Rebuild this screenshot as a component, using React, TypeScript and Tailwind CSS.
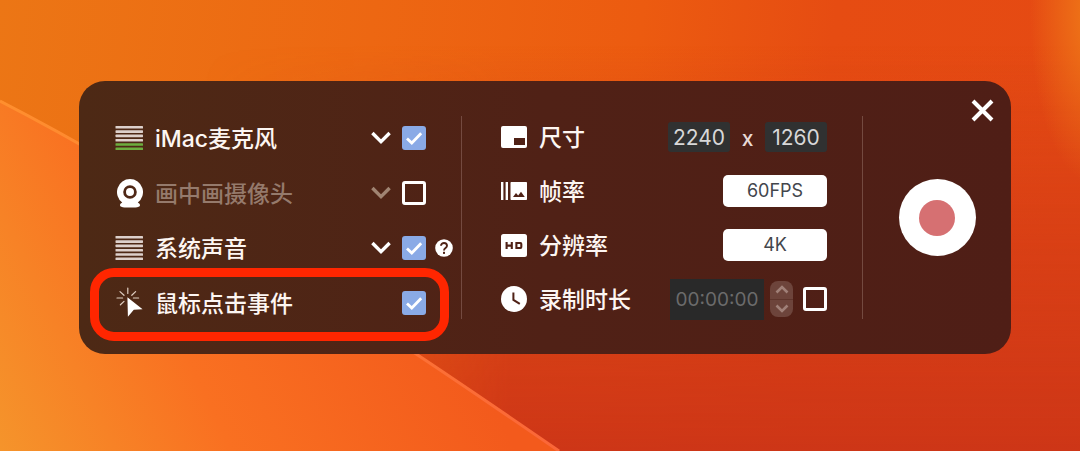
import React, { useState } from 'react';

const FONT = "font-['Inter','Noto_Sans_CJK_SC',sans-serif]";

function Backdrop() {
    return (
        <svg
            className="absolute inset-0 w-full h-full"
            viewBox="0 0 1080 451"
            preserveAspectRatio="none"
            aria-hidden="true"
        >
            <defs>
                <linearGradient id="sky" gradientUnits="userSpaceOnUse" x1="0" y1="0" x2="1060" y2="120">
                    <stop offset="0" stopColor="#ec7615" />
                    <stop offset="0.35" stopColor="#ed6712" />
                    <stop offset="0.6" stopColor="#ec5b10" />
                    <stop offset="0.78" stopColor="#e64c12" />
                    <stop offset="1" stopColor="#e54a13" />
                </linearGradient>
                <linearGradient id="shade" x1="0" y1="0" x2="0" y2="1">
                    <stop offset="0.1" stopColor="#cd3617" stopOpacity="0" />
                    <stop offset="0.85" stopColor="#cf3717" stopOpacity="0.9" />
                    <stop offset="1" stopColor="#cd3617" />
                </linearGradient>
                <linearGradient id="dune" gradientUnits="userSpaceOnUse" x1="0" y1="451" x2="420" y2="250">
                    <stop offset="0" stopColor="#f5942b" />
                    <stop offset="0.45" stopColor="#f97021" />
                    <stop offset="1" stopColor="#f35a1c" />
                </linearGradient>
                <radialGradient id="glow" gradientUnits="userSpaceOnUse" cx="0" cy="0" r="1" gradientTransform="translate(1095 15) scale(65 170)">
                    <stop offset="0" stopColor="#f07a18" />
                    <stop offset="1" stopColor="#f07a18" stopOpacity="0" />
                </radialGradient>
                <linearGradient id="ridge" x1="0" y1="0" x2="1" y2="1">
                    <stop offset="0" stopColor="#ff8f2e" />
                    <stop offset="1" stopColor="#fb6638" />
                </linearGradient>
            </defs>
            <rect width="1080" height="451" fill="url(#sky)" />
            <path d="M0 0H1080V451H560L320 285L0 100Z" fill="url(#sky)" />
            <rect x="200" width="880" height="451" fill="url(#shade)" mask="url(#fade)" />
            <mask id="fade">
                <linearGradient id="fade-in" x1="0" y1="0" x2="1" y2="0">
                    <stop offset="0" stopColor="#000" />
                    <stop offset="0.35" stopColor="#fff" />
                </linearGradient>
                <rect x="200" width="880" height="451" fill="url(#fade-in)" />
            </mask>
            <rect width="1080" height="451" fill="url(#glow)" />
            <path d="M0 100 C140 172 320 285 560 451 H0Z" fill="url(#dune)" />
            <path d="M0 101 C140 173 320 286 559 451" fill="none" stroke="url(#ridge)" strokeWidth="3" />
        </svg>
    );
}

function LevelIcon({ level = 0 }: { level?: number }) {
    return (
        <svg viewBox="0 0 28 26" className="w-7 h-[26px]" aria-hidden="true">
            {[0, 1, 2, 3, 4, 5].map((i) => (
                <rect
                    key={i}
                    x="0.5"
                    y={1 + i * 4.3}
                    width="27.5"
                    height="2.6"
                    rx="0.6"
                    fill={i >= 6 - level ? '#6cae3e' : '#ddd0cb'}
                />
            ))}
        </svg>
    );
}

function WebcamIcon() {
    return (
        <svg viewBox="0 0 28 30" className="w-7 h-[30px]" aria-hidden="true">
            <path
                d="M15 1A13 13 0 0 0 7.2 24.4C5.6 25.2 5 26.2 5 27.2C5 28.6 7 29.4 9.5 29.4H20.5C23 29.4 25 28.6 25 27.2C25 26.2 24.4 25.2 22.8 24.4A13 13 0 0 0 15 1Z"
                fill="#fff"
            />
            <circle cx="15" cy="14" r="5.4" fill="none" stroke="#4f2816" strokeWidth="2.8" />
        </svg>
    );
}

function ClickIcon() {
    return (
        <svg viewBox="0 0 28 32" className="w-7 h-8" aria-hidden="true">
            <path
                d="M12.8 1V6.4M5 4.6L9 8.3M20.6 4.6L16.8 8.3M2 11H7.6M18.4 11H23.6M5.4 17.8L9 14.4"
                fill="none"
                stroke="#e0cfc2"
                strokeWidth="1.2"
                strokeLinecap="round"
            />
            <path d="M12.4 10.2L27.6 22.2L18.8 22.8L12.9 29.8Z" fill="#fff" />
        </svg>
    );
}

function SizeIcon() {
    return (
        <svg viewBox="0 0 26 22" className="w-[26px] h-[22px]" aria-hidden="true">
            <rect width="26" height="22" rx="2" fill="#fff" />
            <rect x="13" y="12" width="11" height="7" fill="#4f2116" />
        </svg>
    );
}

function FrameIcon() {
    return (
        <svg viewBox="0 0 26 18" className="w-[26px] h-[18px]" aria-hidden="true">
            <path d="M0 0H2.4V18H0ZM4.6 0H7V18H4.6ZM10.5 0H25C25.6 0 26 .4 26 1V17C26 17.6 25.6 18 25 18H10.5C9.9 18 9.5 17.6 9.5 17V1C9.5 .4 9.9 0 10.5 0Z" fill="#fff" />
            <path d="M12 15L15 11L17.2 13.6L20 9.8L23.8 15Z" fill="#4f2116" />
        </svg>
    );
}

function HdIcon() {
    return (
        <svg viewBox="0 0 26 23" className="w-[26px] h-[23px]" aria-hidden="true">
            <rect width="26" height="23" rx="2.5" fill="#fff" />
            <path d="M5.6 8V15M10.8 8V15M5.6 11.6H10.8M15.4 9H19.4Q20.3 9 20.3 10V13Q20.3 14 19.4 14H15.4Z" fill="none" stroke="#4f2116" strokeWidth="2.1" />
        </svg>
    );
}

function ClockIcon() {
    return (
        <svg viewBox="0 0 26 27" className="w-[26px] h-[27px]" aria-hidden="true">
            <circle cx="13" cy="13" r="13" fill="#fff" />
            <path d="M12.4 6.5V13.9L18.8 17.9" fill="none" stroke="#4f2116" strokeWidth="2" />
        </svg>
    );
}

function DeviceButton({ label, dim }: { label: string; dim?: boolean }) {
    return (
        <button type="button" aria-label={label} className="mr-[11px]">
            <svg viewBox="0 0 20 14" className="w-5 h-3.5" aria-hidden="true">
                <path
                    d="M1.4 2L10 10.6L18.6 2"
                    fill="none"
                    stroke={dim ? '#a08472' : '#fff'}
                    strokeWidth="3.4"
                />
            </svg>
        </button>
    );
}

function CheckBox({ id, label, initial }: { id: string; label?: string; initial: boolean }) {
    const [checked, setChecked] = useState(initial);

    return (
        <span className="relative block w-6 h-6 shrink-0">
            <input
                type="checkbox"
                id={id}
                aria-label={label}
                checked={checked}
                onChange={(e) => setChecked(e.target.checked)}
                className="block appearance-none w-6 h-6 rounded-[3px] border-[3px] border-white checked:border-0 checked:bg-[#8aaae6]"
            />
            {checked && (
                <svg viewBox="0 0 24 24" className="absolute inset-0 w-6 h-6 pointer-events-none" aria-hidden="true">
                    <path d="M5 12.4L9.8 17L19.2 7.2" fill="none" stroke="#fff" strokeWidth="2.8" />
                </svg>
            )}
        </span>
    );
}

interface SourceRowProps {
    id: string;
    label: string;
    icon: React.ReactNode;
    checked: boolean;
    picker?: boolean;
    dim?: boolean;
    help?: boolean;
    highlight?: boolean;
}

function SourceRow({ id, label, icon, checked, picker, dim, help, highlight }: SourceRowProps) {
    return (
        <div className="relative flex items-center h-8">
            {highlight && (
                <div className="absolute -top-[19px] -bottom-[22px] -left-[25px] right-3 rounded-3xl border-[9px] border-[#ff2600] pointer-events-none" />
            )}
            <span className="w-7 mr-3 shrink-0">{icon}</span>
            <label
                htmlFor={id}
                className={`flex-1 pt-0.5 text-[23px] leading-8 font-medium whitespace-nowrap ${dim ? 'text-[#957a6c]' : 'text-[#fdf6f2]'}`}
            >
                {label}
            </label>
            {picker && <DeviceButton label={`选择${label}`} dim={dim} />}
            <CheckBox id={id} initial={checked} />
            <div className="w-[35px] pl-[9px] shrink-0">
                {help && (
                    <button type="button" aria-label="帮助" className="block w-[18px] h-[18px]">
                        <svg viewBox="0 0 18 18" className="w-[18px] h-[18px]" aria-hidden="true">
                            <circle cx="9" cy="9" r="8.8" fill="#fff" />
                            <path d="M6 6.8C6 3 12 3 12 6.8C12 9 9 9 9 11.4" fill="none" stroke="#4f2417" strokeWidth="1.9" />
                            <rect x="8" y="12.8" width="2" height="2.1" fill="#4f2417" />
                        </svg>
                    </button>
                )}
            </div>
        </div>
    );
}

function SettingRow({ label, icon, htmlFor, children }: { label: string; icon: React.ReactNode; htmlFor: string; children: React.ReactNode }) {
    return (
        <div className="flex items-center h-8">
            <span className="w-[26px] mr-3 shrink-0">{icon}</span>
            <label htmlFor={htmlFor} className="flex-1 pt-0.5 text-[23px] leading-8 font-medium text-[#fdf6f2] whitespace-nowrap">
                {label}
            </label>
            {children}
        </div>
    );
}

const selectClass =
    'appearance-none w-[104px] h-8 rounded-[5px] bg-white text-[#43464c] text-[18px] leading-6 text-center [text-align-last:center]';
const sizeClass =
    'w-[62px] h-[30px] rounded-[3px] bg-[#303131] text-[#d8d8d8] text-[21px] leading-6 text-center';

export default function App() {
    const [width, setWidth] = useState('2240');
    const [height, setHeight] = useState('1260');
    const [duration, setDuration] = useState('00:00:00');

    return (
        <main className={`relative min-h-screen overflow-hidden bg-[#ec5a11] pt-[81px] pb-[97px] pl-[79px] pr-[69px] ${FONT}`}>
            <Backdrop />

            <div className="relative grid grid-cols-[383fr_401fr_148fr] py-[35px] rounded-[26px] bg-gradient-to-r from-[#4d2915] via-[#502116] to-[#4f1e16]">

                {/* Sources */}
                <section className="flex flex-col gap-[23px] pt-1.5 pl-9 border-r border-[#744a40]">
                    <SourceRow id="mic" label="iMac麦克风" icon={<LevelIcon level={2} />} checked picker />
                    <SourceRow id="camera" label="画中画摄像头" icon={<WebcamIcon />} checked={false} picker dim />
                    <SourceRow id="system-audio" label="系统声音" icon={<LevelIcon />} checked picker help />
                    <SourceRow id="mouse-click" label="鼠标点击事件" icon={<ClickIcon />} checked highlight />
                </section>

                {/* Output settings */}
                <section className="flex flex-col gap-[22px] pt-[5px] pl-[39px] pr-[35px] border-r border-[#744a40]">
                    <SettingRow label="尺寸" icon={<SizeIcon />} htmlFor="size-width">
                        <input id="size-width" value={width} onChange={(e) => setWidth(e.target.value)} className={sizeClass} />
                        <span className="w-[35px] pt-1 text-center text-[21px] leading-6 font-medium text-[#e8dad5]">x</span>
                        <input aria-label="高度" value={height} onChange={(e) => setHeight(e.target.value)} className={sizeClass} />
                    </SettingRow>
                    <SettingRow label="帧率" icon={<FrameIcon />} htmlFor="fps">
                        <select id="fps" className={selectClass}>
                            <option>60FPS</option>
                        </select>
                    </SettingRow>
                    <SettingRow label="分辨率" icon={<HdIcon />} htmlFor="resolution">
                        <select id="resolution" className={selectClass}>
                            <option>4K</option>
                        </select>
                    </SettingRow>
                    <SettingRow label="录制时长" icon={<ClockIcon />} htmlFor="duration">
                        <input
                            id="duration"
                            value={duration}
                            onChange={(e) => setDuration(e.target.value)}
                            className="w-[94px] h-[41px] bg-[#292929] text-[#6b6b6b] text-[19px] leading-6 text-center"
                        />
                        <span className="flex flex-col w-[23px] h-9 ml-1.5 mr-2.5 rounded-lg overflow-hidden bg-[#6d443b]">
                            <button type="button" aria-label="增加时长" className="flex-1 flex items-center justify-center border-b border-[#5e352c]">
                                <svg viewBox="0 0 14 9" className="w-3.5 h-[9px]" aria-hidden="true">
                                    <path d="M1.5 7.5L7 2L12.5 7.5" fill="none" stroke="#a08078" strokeWidth="2.6" />
                                </svg>
                            </button>
                            <button type="button" aria-label="减少时长" className="flex-1 flex items-center justify-center">
                                <svg viewBox="0 0 14 9" className="w-3.5 h-[9px]" aria-hidden="true">
                                    <path d="M1.5 1.5L7 7L12.5 1.5" fill="none" stroke="#a08078" strokeWidth="2.6" />
                                </svg>
                            </button>
                        </span>
                        <CheckBox id="limit-duration" label="限制录制时长" initial={false} />
                    </SettingRow>
                </section>

                {/* Record */}
                <section className="flex items-center justify-center">
                    <button
                        type="button"
                        aria-label="开始录制"
                        className="flex items-center justify-center w-[77px] h-[77px] rounded-full bg-white"
                    >
                        <span className="w-9 h-9 rounded-full bg-[#d67072]" />
                    </button>
                </section>

                <button type="button" aria-label="关闭" className="absolute top-[18px] right-[17px]">
                    <svg viewBox="0 0 23 23" className="w-[23px] h-[23px]" aria-hidden="true">
                        <path d="M2 2L21 21M21 2L2 21" stroke="#fff" strokeWidth="4" />
                    </svg>
                </button>
            </div>
        </main>
    );
}
